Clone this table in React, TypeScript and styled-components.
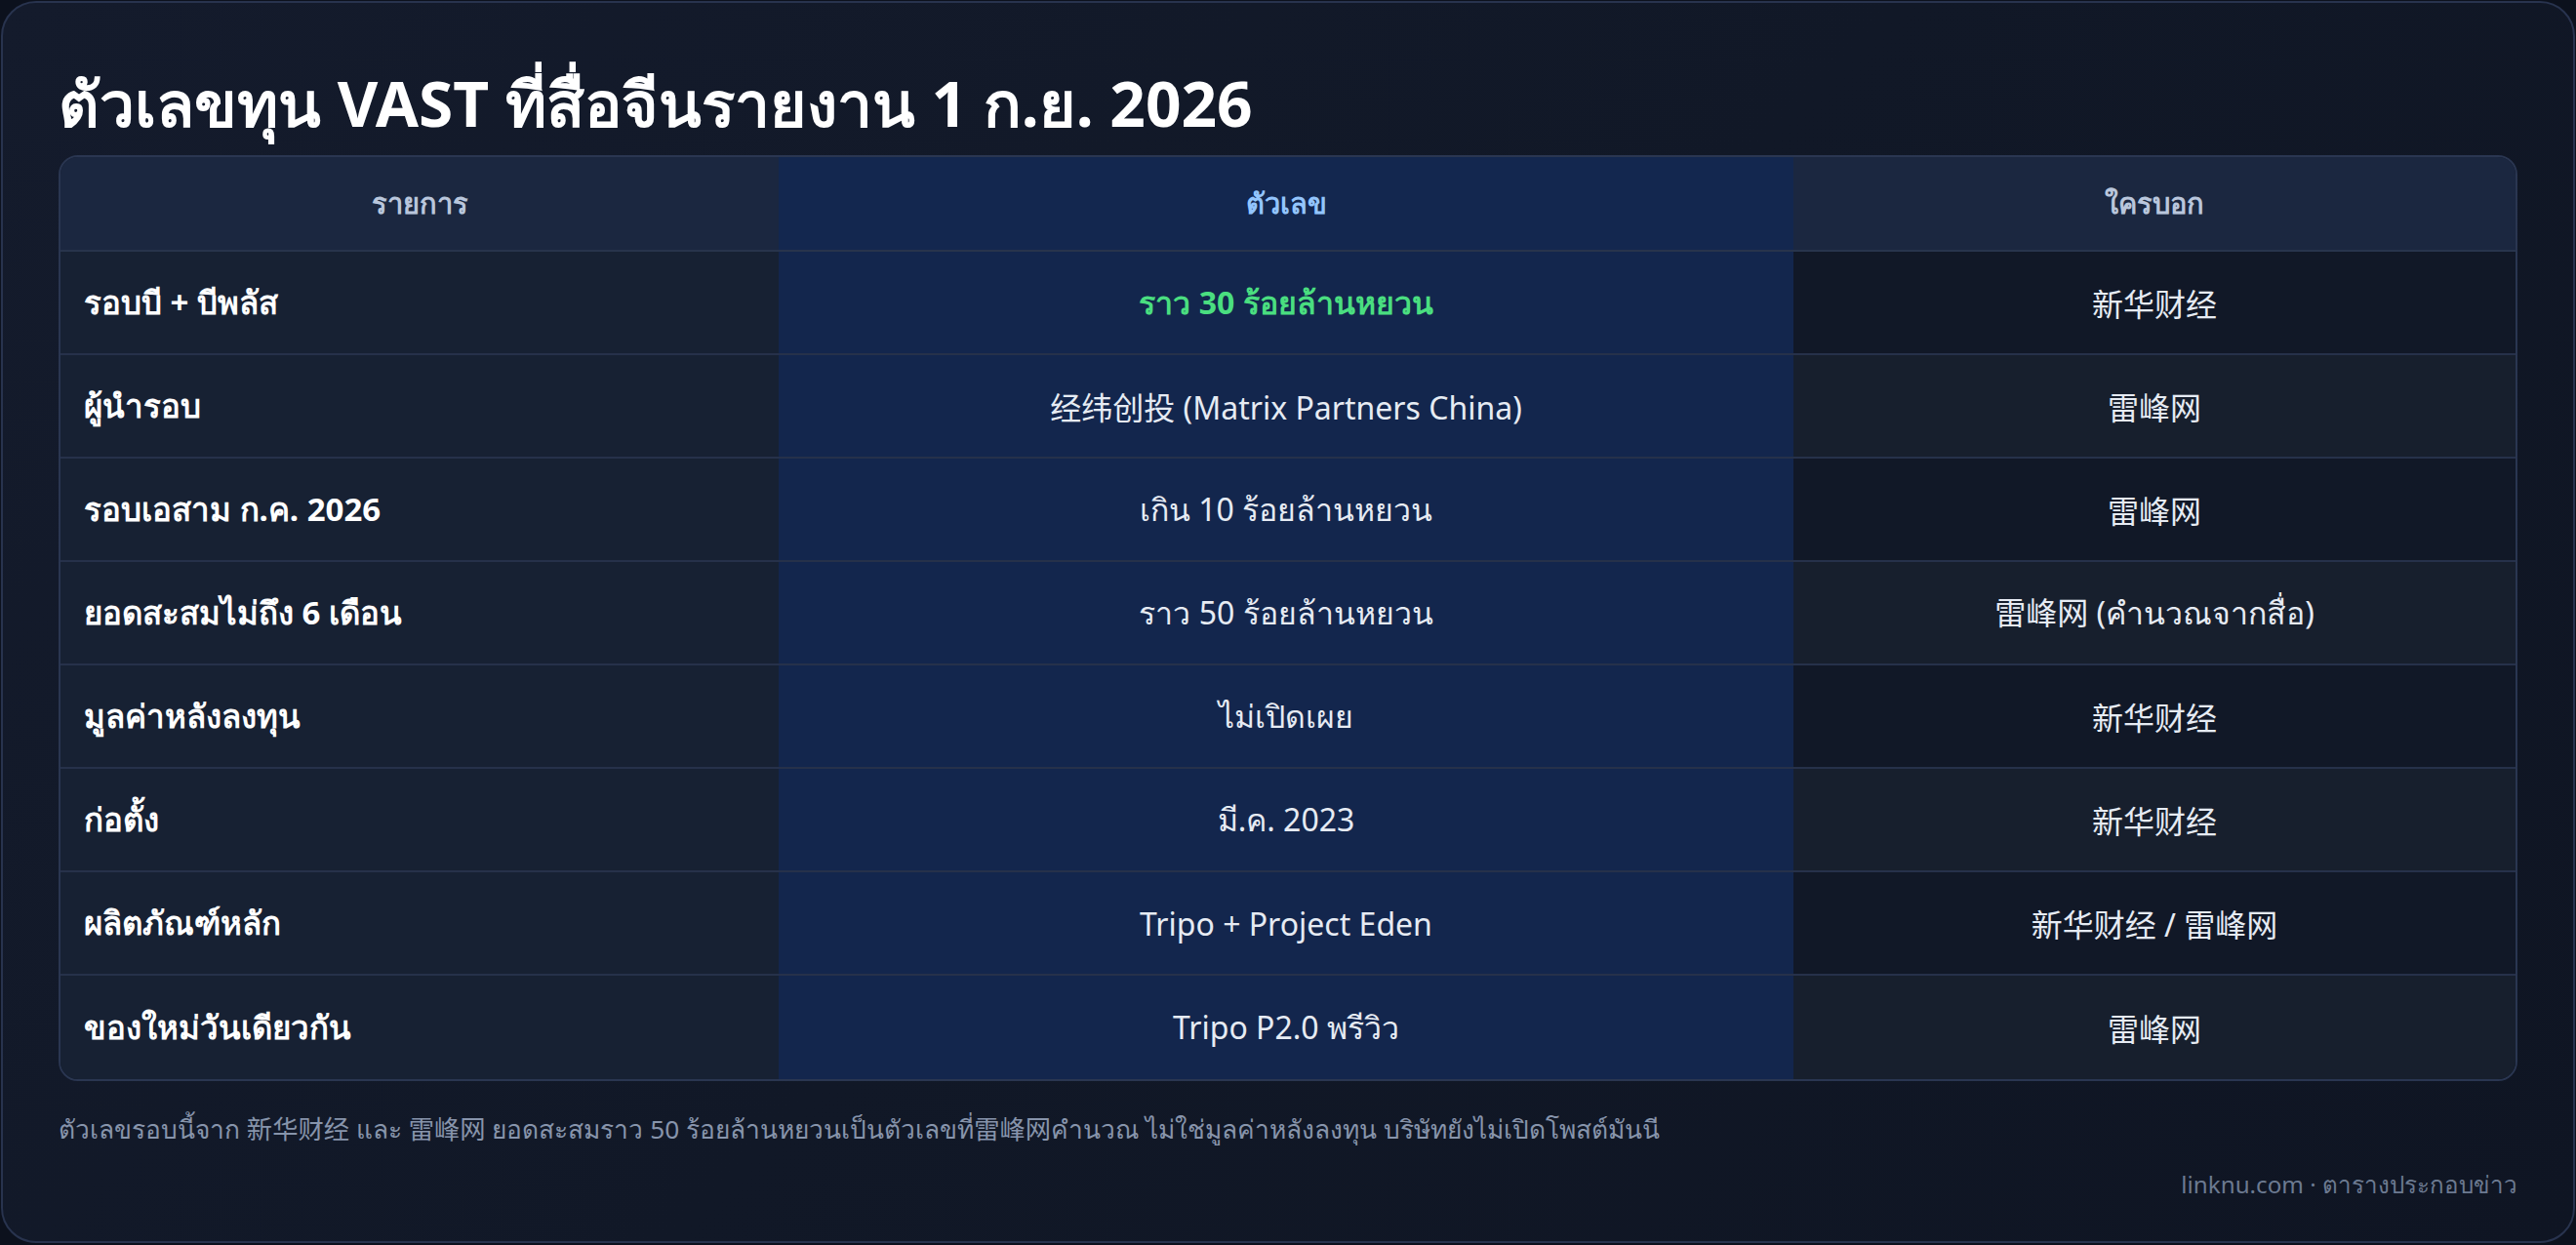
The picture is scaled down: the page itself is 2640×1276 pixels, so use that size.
import styled, { createGlobalStyle } from "styled-components";

const GlobalStyle = createGlobalStyle`
    html, body {
        margin: 0;
        padding: 0;
        background: #0c111d;
    }
    * {
        box-sizing: border-box;
    }
`

const font = `"Noto Sans", "Noto Sans CJK SC", sans-serif`

const rows = [
    { label: "รอบบี + บีพลัส", value: "ราว 30 ร้อยล้านหยวน", source: "新华财经", highlight: true },
    { label: "ผู้นำรอบ", value: "经纬创投 (Matrix Partners China)", source: "雷峰网" },
    { label: "รอบเอสาม ก.ค. 2026", value: "เกิน 10 ร้อยล้านหยวน", source: "雷峰网" },
    { label: "ยอดสะสมไม่ถึง 6 เดือน", value: "ราว 50 ร้อยล้านหยวน", source: "雷峰网 (คำนวณจากสื่อ)" },
    { label: "มูลค่าหลังลงทุน", value: "ไม่เปิดเผย", source: "新华财经" },
    { label: "ก่อตั้ง", value: "มี.ค. 2023", source: "新华财经" },
    { label: "ผลิตภัณฑ์หลัก", value: "Tripo + Project Eden", source: "新华财经 / 雷峰网" },
    { label: "ของใหม่วันเดียวกัน", value: "Tripo P2.0 พรีวิว", source: "雷峰网" },
]

const Card = styled.div`
    width: 2638px;
    height: 1273px;
    margin: 1px 0 0 1px;
    padding: 0 57px;
    border: 2px solid #28334e;
    border-radius: 36px;
    background: linear-gradient(135deg, #141b2c 0%, #111827 50%, #0f1523 100%);
    font-family: ${font};
    display: flex;
    flex-direction: column;
`

const Title = styled.h1`
    margin: 63px 0 13px;
    height: 80px;
    line-height: 80px;
    font-size: 64px;
    font-weight: 700;
    color: #ffffff;
    white-space: nowrap;
`

const Table = styled.div`
    border: 2px solid #2a3651;
    border-radius: 20px;
    overflow: hidden;
    display: grid;
    grid-template-columns: 736px 1040px 1fr;
`

const HeadCell = styled.div<{ $accent?: boolean }>`
    height: 97px;
    display: flex;
    align-items: center;
    justify-content: center;
    border-bottom: 2px solid #28344c;
    background: ${p => (p.$accent ? "#13274f" : "#1b2740")};
    color: ${p => (p.$accent ? "#93c5fd" : "#b9c6dc")};
    font-size: 29px;
    font-weight: 600;
`

const Cell = styled.div<{ $kind: "label" | "value" | "source"; $alt?: boolean; $last?: boolean; $highlight?: boolean }>`
    height: 106px;
    display: flex;
    align-items: center;
    justify-content: ${p => (p.$kind === "label" ? "flex-start" : "center")};
    padding: 0 24px;
    border-bottom: ${p => (p.$last ? "none" : "2px solid #26314a")};
    background: ${p =>
        p.$kind === "label" ? "#172133" : p.$kind === "value" ? "#13264d" : p.$alt ? "#171f2d" : "#111827"};
    color: ${p => (p.$highlight ? "#4ade80" : p.$kind === "label" ? "#ffffff" : "#e6ebf3")};
    font-size: ${p => (p.$kind === "label" ? 33 : 32)}px;
    font-weight: ${p => (p.$kind === "label" || p.$highlight ? 700 : 400)};
`

const Note = styled.p`
    margin: 31px 0 0;
    font-size: 26.3px;
    line-height: 36px;
    color: #8794ab;
    white-space: nowrap;
`

const Credit = styled.div`
    margin-top: 22px;
    text-align: right;
    font-size: 24.2px;
    line-height: 34px;
    color: #6c7a91;
`

export default function App() {
    return (
        <>
            <GlobalStyle />
            <Card>
                <Title>ตัวเลขทุน VAST ที่สื่อจีนรายงาน 1 ก.ย. 2026</Title>
                <Table>
                    <HeadCell>รายการ</HeadCell>
                    <HeadCell $accent>ตัวเลข</HeadCell>
                    <HeadCell>ใครบอก</HeadCell>
                    {rows.map((r, i) => {
                        const last = i === rows.length - 1
                        const alt = i % 2 === 1
                        return [
                            <Cell key={`l${i}`} $kind="label" $last={last}>{r.label}</Cell>,
                            <Cell key={`v${i}`} $kind="value" $last={last} $highlight={r.highlight}>{r.value}</Cell>,
                            <Cell key={`s${i}`} $kind="source" $last={last} $alt={alt}>{r.source}</Cell>,
                        ]
                    })}
                </Table>
                <Note>ตัวเลขรอบนี้จาก 新华财经 และ 雷峰网 ยอดสะสมราว 50 ร้อยล้านหยวนเป็นตัวเลขที่雷峰网คำนวณ ไม่ใช่มูลค่าหลังลงทุน บริษัทยังไม่เปิดโพสต์มันนี</Note>
                <Credit>linknu.com · ตารางประกอบข่าว</Credit>
            </Card>
        </>
    )
}
